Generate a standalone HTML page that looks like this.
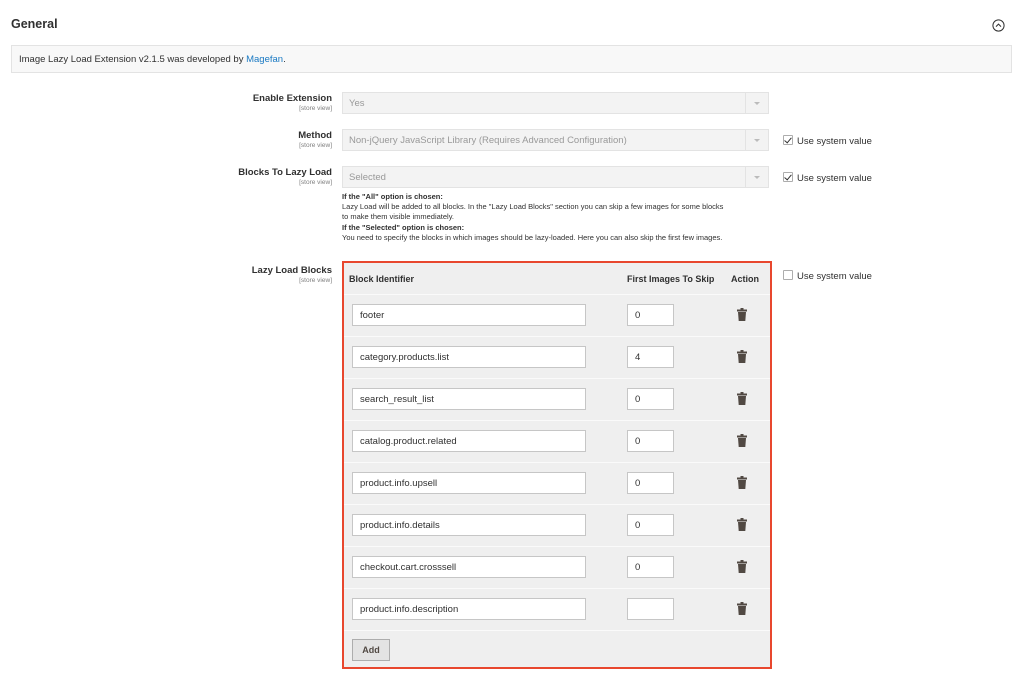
<!DOCTYPE html>
<html><head><meta charset="utf-8"><style>
*{box-sizing:border-box;margin:0;padding:0}
body{width:1024px;height:676px;background:#fff;font-family:"Liberation Sans",sans-serif;color:#303030;position:relative;overflow:hidden}
.abs{position:absolute}
.lbl{position:absolute;right:692px;text-align:right;font-weight:bold;font-size:9.5px;color:#303030}
.lbl small{display:block;font-weight:normal;font-size:6.5px;color:#808080;margin-top:1px}
.sel{position:absolute;left:342px;width:427px;height:22px;background:#f3f3f3;border:1px solid #e3e3e3;font-size:9.5px;color:#999;padding:5px 6px}
.sel:after{content:"";position:absolute;right:0;top:0;width:22px;height:20px;border-left:1px solid #e3e3e3}
.sel i{position:absolute;right:8px;top:9px;border:3px solid transparent;border-top:3px solid #bbb}
.cb{position:absolute;left:783px;font-size:9.5px;color:#303030}
.cb b{display:inline-block;width:10px;height:10px;border:1px solid #adadad;vertical-align:-1px;margin-right:4px;position:relative;background:#fff;border-radius:1px}
.cb b.on:after{content:"";position:absolute;left:2px;top:0px;width:3px;height:6px;border:solid #303030;border-width:0 1.5px 1.5px 0;transform:rotate(40deg)}
.help{position:absolute;left:342px;top:192px;font-size:7.5px;line-height:10.2px;color:#303030;width:428px}
.box{position:absolute;left:342px;top:261px;width:430px;height:408px;border:2px solid #e8472e;background:#efefef}
.hdr{position:absolute;top:11px;font-size:9px;font-weight:bold;color:#303030}
.row{position:absolute;left:0;width:426px;height:42px;border-top:1px solid #fafafa}
.inp{position:absolute;background:#fff;border:1px solid #c6c6c6;height:22px;font-size:9.5px;padding:5px 7px;color:#303030}
.trash{position:absolute;left:393px;top:13px}
</style></head><body>
<div class="abs" style="left:11px;top:17px;font-size:12.5px;font-weight:bold;color:#303030">General</div>
<svg class="abs" style="left:992px;top:19px" width="13" height="13" viewBox="0 0 13 13"><circle cx="6.5" cy="6.5" r="5.6" fill="none" stroke="#303030" stroke-width="1"/><path d="M4 7.6 L6.5 5.1 L9 7.6" fill="none" stroke="#303030" stroke-width="1"/></svg>
<div class="abs" style="left:11px;top:45px;width:1001px;height:28px;background:#f8f8f8;border:1px solid #e3e3e3;font-size:9.5px;padding:8px 7px">Image Lazy Load Extension v2.1.5 was developed by <span style="color:#1979c3">Magefan</span>.</div>

<div class="lbl" style="top:93px">Enable Extension<small>[store view]</small></div>
<div class="sel" style="top:92px">Yes<i></i></div>

<div class="lbl" style="top:130px">Method<small>[store view]</small></div>
<div class="sel" style="top:129px">Non-jQuery JavaScript Library (Requires Advanced Configuration)<i></i></div>
<div class="cb" style="top:135px"><b class="on"></b>Use system value</div>

<div class="lbl" style="top:167px">Blocks To Lazy Load<small>[store view]</small></div>
<div class="sel" style="top:166px">Selected<i></i></div>
<div class="cb" style="top:172px"><b class="on"></b>Use system value</div>

<div class="help"><b>If the "All" option is chosen:</b><br>Lazy Load will be added to all blocks. In the "Lazy Load Blocks" section you can skip a few images for some blocks<br>to make them visible immediately.<br><b>If the "Selected" option is chosen:</b><br>You need to specify the blocks in which images should be lazy-loaded. Here you can also skip the first few images.</div>

<div class="lbl" style="top:265px">Lazy Load Blocks<small>[store view]</small></div>
<div class="cb" style="top:270px"><b></b>Use system value</div>

<div class="box">
<div class="hdr" style="left:5px">Block Identifier</div>
<div class="hdr" style="left:283px">First Images To Skip</div>
<div class="hdr" style="left:387px">Action</div>
<div class="row" style="top:31px"><div class="inp" style="left:8px;top:9px;width:234px">footer</div><div class="inp" style="left:283px;top:9px;width:47px">0</div><svg class="trash" width="10" height="13" viewBox="0 0 10 13"><rect x="3.5" y="0" width="3" height="2" fill="#514943"/><rect x="0" y="1.5" width="10" height="2" fill="#514943"/><path d="M1 4 H9 L8.3 13 H1.7 Z" fill="#514943"/></svg></div>
<div class="row" style="top:73px"><div class="inp" style="left:8px;top:9px;width:234px">category.products.list</div><div class="inp" style="left:283px;top:9px;width:47px">4</div><svg class="trash" width="10" height="13" viewBox="0 0 10 13"><rect x="3.5" y="0" width="3" height="2" fill="#514943"/><rect x="0" y="1.5" width="10" height="2" fill="#514943"/><path d="M1 4 H9 L8.3 13 H1.7 Z" fill="#514943"/></svg></div>
<div class="row" style="top:115px"><div class="inp" style="left:8px;top:9px;width:234px">search_result_list</div><div class="inp" style="left:283px;top:9px;width:47px">0</div><svg class="trash" width="10" height="13" viewBox="0 0 10 13"><rect x="3.5" y="0" width="3" height="2" fill="#514943"/><rect x="0" y="1.5" width="10" height="2" fill="#514943"/><path d="M1 4 H9 L8.3 13 H1.7 Z" fill="#514943"/></svg></div>
<div class="row" style="top:157px"><div class="inp" style="left:8px;top:9px;width:234px">catalog.product.related</div><div class="inp" style="left:283px;top:9px;width:47px">0</div><svg class="trash" width="10" height="13" viewBox="0 0 10 13"><rect x="3.5" y="0" width="3" height="2" fill="#514943"/><rect x="0" y="1.5" width="10" height="2" fill="#514943"/><path d="M1 4 H9 L8.3 13 H1.7 Z" fill="#514943"/></svg></div>
<div class="row" style="top:199px"><div class="inp" style="left:8px;top:9px;width:234px">product.info.upsell</div><div class="inp" style="left:283px;top:9px;width:47px">0</div><svg class="trash" width="10" height="13" viewBox="0 0 10 13"><rect x="3.5" y="0" width="3" height="2" fill="#514943"/><rect x="0" y="1.5" width="10" height="2" fill="#514943"/><path d="M1 4 H9 L8.3 13 H1.7 Z" fill="#514943"/></svg></div>
<div class="row" style="top:241px"><div class="inp" style="left:8px;top:9px;width:234px">product.info.details</div><div class="inp" style="left:283px;top:9px;width:47px">0</div><svg class="trash" width="10" height="13" viewBox="0 0 10 13"><rect x="3.5" y="0" width="3" height="2" fill="#514943"/><rect x="0" y="1.5" width="10" height="2" fill="#514943"/><path d="M1 4 H9 L8.3 13 H1.7 Z" fill="#514943"/></svg></div>
<div class="row" style="top:283px"><div class="inp" style="left:8px;top:9px;width:234px">checkout.cart.crosssell</div><div class="inp" style="left:283px;top:9px;width:47px">0</div><svg class="trash" width="10" height="13" viewBox="0 0 10 13"><rect x="3.5" y="0" width="3" height="2" fill="#514943"/><rect x="0" y="1.5" width="10" height="2" fill="#514943"/><path d="M1 4 H9 L8.3 13 H1.7 Z" fill="#514943"/></svg></div>
<div class="row" style="top:325px"><div class="inp" style="left:8px;top:9px;width:234px">product.info.description</div><div class="inp" style="left:283px;top:9px;width:47px"></div><svg class="trash" width="10" height="13" viewBox="0 0 10 13"><rect x="3.5" y="0" width="3" height="2" fill="#514943"/><rect x="0" y="1.5" width="10" height="2" fill="#514943"/><path d="M1 4 H9 L8.3 13 H1.7 Z" fill="#514943"/></svg></div>
<div class="row" style="top:367px"></div>
<div class="abs" style="left:8px;top:376px;width:38px;height:22px;background:#e3e3e3;border:1px solid #adadad;font-size:9px;font-weight:bold;color:#514943;text-align:center;padding-top:5px">Add</div>
</div>
</body></html>
